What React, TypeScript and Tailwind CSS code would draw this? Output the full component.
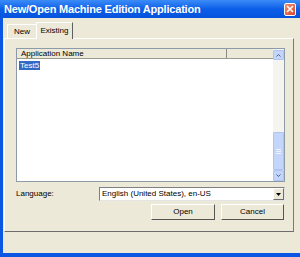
export default function App() {
  const font = { fontFamily: '"Liberation Sans", Arial, sans-serif' };
  return (
    <div className="w-[300px] h-[257px] flex flex-col bg-[#ece9d8] overflow-hidden" style={font}>
      {/* title bar */}
      <div className="h-[18px] flex items-center justify-between pl-[4px] pr-[4px] bg-gradient-to-b from-[#3b8cf7] via-[#0b5ee8] to-[#0653dc]">
        <span className="text-[11px] font-bold text-white leading-none tracking-[-0.2px]">
          New/Open Machine Edition Application
        </span>
        <div className="w-[12px] h-[13px] rounded-[2px] border border-white bg-gradient-to-br from-[#f08d6c] to-[#d5462a] flex items-center justify-center">
          <svg width="8" height="8" viewBox="0 0 8 8">
            <path d="M1 1L7 7M7 1L1 7" stroke="white" strokeWidth="1.6" />
          </svg>
        </div>
      </div>

      {/* body */}
      <div className="flex-1 flex flex-col border-l-[3px] border-b-[4px] border-[#0b56e2]">
        {/* tab strip */}
        <div className="h-[20px] flex items-end pl-[3px] ml-[1px]">
          <div className="h-[14px] w-[29px] flex items-center justify-center border-t border-l border-white text-[8px] text-black">
            New
          </div>
          <div className="h-[17px] w-[37px] flex items-center justify-center border-t border-l border-white border-r border-r-[#5f5f5f] bg-[#ece9d8] text-[8px] text-black -mb-px relative">
            Existing
          </div>
        </div>

        {/* tab pane */}
        <div className="ml-[1px] w-[290px] h-[194px] border-t border-l border-white border-r border-b border-r-[#7a7a7a] border-b-[#6d6d6d] flex flex-col pt-[9px] pl-[11px] pr-[8px]">
          {/* list view */}
          <div className="w-[269px] h-[134px] border border-[#8d9aa8] bg-white flex">
            <div className="flex-1 flex flex-col">
              <div className="h-[10px] flex bg-[#ece9d8] border-b border-[#9b9a90]">
                <div className="w-[210px] border-r border-[#8a8a80] pl-[4px] text-[8px] leading-[10px] text-black">
                  Application Name
                </div>
                <div className="flex-1" />
              </div>
              <div className="mt-[2px] ml-[2px] h-[9px] flex">
                <div className="bg-[#316ac5] text-white text-[8px] leading-[9px] px-[1px]">Test5</div>
              </div>
            </div>
            {/* scrollbar */}
            <div className="w-[11px] flex flex-col bg-[#f5f4ee]">
              <div className="h-[10px] mt-px bg-[#c4d5fc] border border-[#b0c4f2] rounded-[1px] flex items-center justify-center">
                <svg width="5" height="3" viewBox="0 0 5 3">
                  <path d="M0.5 2.5L2.5 0.5L4.5 2.5" stroke="#4d6185" strokeWidth="1" fill="none" />
                </svg>
              </div>
              <div className="flex-1" />
              <div className="h-[38px] bg-[#c4d5fc] border border-[#b0c4f2] rounded-[1px] flex flex-col items-center justify-center gap-[1px]">
                <div className="w-[5px] h-px bg-[#eef3ff]" />
                <div className="w-[5px] h-px bg-[#eef3ff]" />
                <div className="w-[5px] h-px bg-[#eef3ff]" />
              </div>
              <div className="h-[11px] bg-[#c4d5fc] border border-[#b0c4f2] rounded-[1px] flex items-center justify-center">
                <svg width="5" height="3" viewBox="0 0 5 3">
                  <path d="M0.5 0.5L2.5 2.5L4.5 0.5" stroke="#4d6185" strokeWidth="1" fill="none" />
                </svg>
              </div>
            </div>
          </div>

          {/* language row */}
          <div className="mt-[5px] h-[14px] flex items-center">
            <span className="w-[83px] text-[8px] text-black">Language:</span>
            <div className="w-[186px] h-[14px] bg-white border border-[#7f7f7f] border-r-[#e4e4e4] border-b-[#e4e4e4] flex items-center">
              <span className="flex-1 pl-[2px] text-[8px] text-black leading-none">English (United States), en-US</span>
              <div className="w-[11px] h-[12px] bg-[#ece9d8] border border-white border-r-[#6d6d6d] border-b-[#6d6d6d] flex items-center justify-center">
                <svg width="5" height="3" viewBox="0 0 5 3">
                  <path d="M0 0H5L2.5 3Z" fill="black" />
                </svg>
              </div>
            </div>
          </div>

          {/* buttons */}
          <div className="mt-[3px] flex justify-end gap-[6px] pr-[1px]">
            <div className="w-[64px] h-[16px] border border-white border-r-[#555] border-b-[#555] flex items-center justify-center text-[8px] text-black">
              Open
            </div>
            <div className="w-[63px] h-[16px] border border-white border-r-[#555] border-b-[#555] flex items-center justify-center text-[8px] text-black">
              Cancel
            </div>
          </div>
        </div>
      </div>
    </div>
  );
}
